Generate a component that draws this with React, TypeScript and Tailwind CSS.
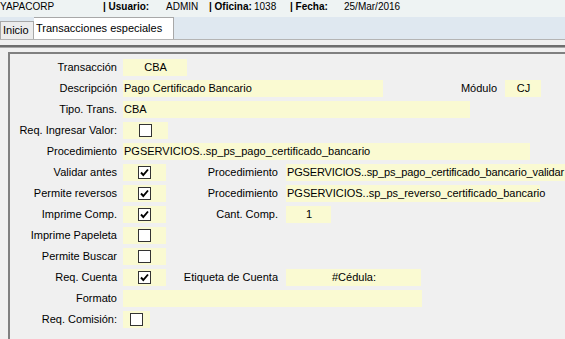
import React from "react";

function Check({ on }: { on?: boolean }) {
  return (
    <span className="flex h-[13px] w-[13px] items-center justify-center border border-[#333333] bg-white">
      {on && (
        <svg width="11" height="11" viewBox="0 0 11 11">
          <path d="M2 5.5 L4.3 8 L9 2.5" fill="none" stroke="#000" strokeWidth="1.9" />
        </svg>
      )}
    </span>
  );
}

function Field({
  w,
  text,
  center,
  tight,
}: {
  w: string;
  text?: string;
  center?: boolean;
  tight?: boolean;
}) {
  return (
    <div
      className={`flex h-[17px] shrink-0 items-center whitespace-nowrap bg-[#fafad2] pl-[1px] ${w} ${
        center ? "justify-center" : ""
      } ${tight ? "tracking-[-0.15px]" : ""}`}
    >
      {text}
    </div>
  );
}

function CheckCell({ w, on }: { w: string; on?: boolean }) {
  return (
    <div className={`flex h-[17px] shrink-0 items-center justify-center bg-[#fafad2] ${w}`}>
      <Check on={on} />
    </div>
  );
}

function Row({ label, children }: { label: string; children: React.ReactNode }) {
  return (
    <div className="flex h-[17px] items-center">
      <div className="w-[107px] shrink-0 whitespace-nowrap text-right">{label}</div>
      <div className="ml-[6px] flex items-center">{children}</div>
    </div>
  );
}

function SideLabel({ text, w }: { text: string; w: string }) {
  return <div className={`shrink-0 whitespace-nowrap pr-[8px] text-right ${w}`}>{text}</div>;
}

export default function App() {
  return (
    <div className="h-[339px] w-[565px] overflow-hidden bg-[#f0f0f0] font-['Liberation_Sans',Arial,sans-serif] text-[11px] text-black">
      {/* header */}
      <div className="flex h-[17px] items-start bg-[#eef3f3] pt-[1px] text-[10px] leading-[12px]">
        <span className="w-[103px] shrink-0">YAPACORP</span>
        <span className="w-[63px] shrink-0 font-bold">| Usuario:</span>
        <span className="w-[43px] shrink-0">ADMIN</span>
        <span className="w-[45px] shrink-0 font-bold">| Oficina:</span>
        <span className="w-[36px] shrink-0">1038</span>
        <span className="w-[54px] shrink-0 font-bold">| Fecha:</span>
        <span>25/Mar/2016</span>
      </div>

      {/* tabs */}
      <div className="flex h-[22px] items-end bg-[#dfe8f0]">
        <div className="flex h-[18px] w-[34px] items-center border border-b-0 border-[#a8a8a8] bg-[#ececec] pl-[2px]">
          Inicio
        </div>
        <div className="flex h-[22px] w-[140px] items-center border border-b-0 border-l-0 border-[#a8a8a8] bg-white pl-[2px]">
          Transacciones especiales
        </div>
      </div>
      <div className="h-[1px] bg-[#b4b4b4]" />
      <div className="h-[5px]" />
      <div className="h-[2px] bg-[#6e6e6e]" />
      <div className="h-[1px] bg-[#a8a8a8]" />
      <div className="h-[4px]" />

      {/* panel */}
      <div className="ml-[8px] h-[400px] border-l-2 border-t-2 border-[#808080] pt-[5px]">
        <div className="flex flex-col gap-[4px]">
          <Row label="Transacción">
            <Field w="w-[64px]" text="CBA" center />
          </Row>
          <Row label="Descripción">
            <Field w="w-[260px]" text="Pago Certificado Bancario" />
            <SideLabel text="Módulo" w="w-[122px]" />
            <Field w="w-[36px]" text="CJ" center />
          </Row>
          <Row label="Tipo. Trans.">
            <Field w="w-[347px]" text="CBA" />
          </Row>
          <Row label="Req. Ingresar Valor:">
            <CheckCell w="w-[45px]" />
          </Row>
          <Row label="Procedimiento">
            <Field w="w-[407px]" text="PGSERVICIOS..sp_ps_pago_certificado_bancario" />
          </Row>
          <Row label="Validar antes">
            <CheckCell w="w-[43px]" on />
            <SideLabel text="Procedimiento" w="w-[120px]" />
            <Field
              w="w-[300px]"
              text="PGSERVICIOS..sp_ps_pago_certificado_bancario_validar"
              tight
            />
          </Row>
          <Row label="Permite reversos">
            <CheckCell w="w-[43px]" on />
            <SideLabel text="Procedimiento" w="w-[120px]" />
            <Field w="w-[254px]" text="PGSERVICIOS..sp_ps_reverso_certificado_bancario" />
          </Row>
          <Row label="Imprime Comp.">
            <CheckCell w="w-[43px]" on />
            <SideLabel text="Cant. Comp." w="w-[120px]" />
            <Field w="w-[45px]" text="1" center />
          </Row>
          <Row label="Imprime Papeleta">
            <CheckCell w="w-[43px]" />
          </Row>
          <Row label="Permite Buscar">
            <CheckCell w="w-[43px]" />
          </Row>
          <Row label="Req. Cuenta">
            <CheckCell w="w-[43px]" on />
            <SideLabel text="Etiqueta de Cuenta" w="w-[120px]" />
            <Field w="w-[135px]" text="#Cédula:" center />
          </Row>
          <Row label="Formato">
            <Field w="w-[299px]" />
          </Row>
          <Row label="Req. Comisión:">
            <CheckCell w="w-[27px]" />
          </Row>
        </div>
      </div>
    </div>
  );
}
